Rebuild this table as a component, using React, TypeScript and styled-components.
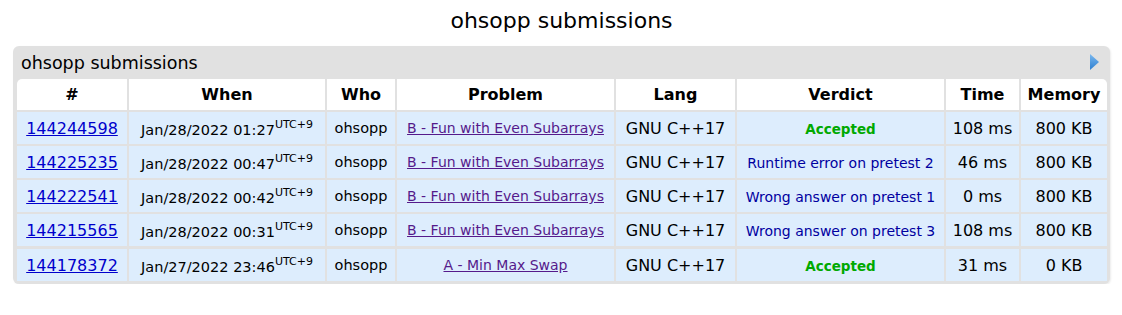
import React from 'react'
import styled, { createGlobalStyle } from 'styled-components'

const GlobalStyle = createGlobalStyle`
  body {
    margin: 0;
    background: #fff;
    font-family: 'DejaVu Sans', Verdana, sans-serif;
    color: #000;
  }
`

const Page = styled.div`
  padding: 8px 12px 0 13px;
`

const Title = styled.h1`
  margin: 0 0 12px;
  text-align: center;
  font-size: 22px;
  font-weight: normal;
  line-height: 26px;
`

const Panel = styled.div`
  width: 1097px;
  background: #e1e1e1;
  border-radius: 6px;
  padding: 0 3px 3px 4px;
  box-sizing: border-box;
  box-shadow: 1px 1px 2px rgba(0, 0, 0, 0.08);
`

const PanelHead = styled.div`
  display: flex;
  align-items: center;
  justify-content: space-between;
  height: 33px;
  padding: 0 8px 0 4px;
  font-size: 17.5px;
`

const Arrow = styled.svg`
  display: block;
  margin-top: -1px;
`

const Table = styled.table`
  width: 1090px;
  border-collapse: separate;
  border-spacing: 0;
  table-layout: fixed;
`

const Th = styled.th<{ $w: number; $last?: boolean; $first?: boolean }>`
  width: ${p => p.$w}px;
  height: 31px;
  padding: 0;
  background: #fff;
  font-size: 16px;
  font-weight: bold;
  text-align: center;
  border-right: ${p => (p.$last ? 'none' : '2px solid #e1e1e1')};
  border-bottom: 2px solid #e1e1e1;
  border-top-left-radius: ${p => (p.$first ? '5px' : '0')};
  border-top-right-radius: ${p => (p.$last ? '5px' : '0')};
`

const Td = styled.td<{ $size?: number; $last?: boolean; $thick?: boolean; $bottom?: boolean }>`
  height: 32px;
  padding: 0;
  background: #ddedfd;
  text-align: center;
  font-size: ${p => p.$size ?? 16}px;
  white-space: nowrap;
  overflow: hidden;
  border-right: ${p => (p.$last ? 'none' : '2px solid #e1e1e1')};
  border-bottom: ${p => (p.$bottom ? 'none' : p.$thick ? '3px solid #e1e1e1' : '2px solid #e1e1e1')};
`

const IdLink = styled.a`
  color: #0000cc;
  text-decoration: underline;
`

const ProblemLink = styled.a`
  color: #551a8b;
  text-decoration: underline;
`

const When = styled.span`
  position: relative;
  top: 2px;
`

const Sup = styled.sup`
  font-size: 11px;
  vertical-align: 7px;
  line-height: 0;
`

const Verdict = styled.span<{ $ok: boolean }>`
  color: ${p => (p.$ok ? '#00a900' : '#0000a0')};
  font-weight: ${p => (p.$ok ? 'bold' : 'normal')};
  font-size: ${p => (p.$ok ? '13.5px' : '14px')};
`

const columns = [
  { label: '#', w: 110 },
  { label: 'When', w: 196 },
  { label: 'Who', w: 68 },
  { label: 'Problem', w: 217 },
  { label: 'Lang', w: 119 },
  { label: 'Verdict', w: 207 },
  { label: 'Time', w: 73 },
  { label: 'Memory', w: 86 },
]

const rows = [
  { id: '144244598', when: 'Jan/28/2022 01:27', problem: 'B - Fun with Even Subarrays', verdict: 'Accepted', ok: true, time: '108 ms', mem: '800 KB' },
  { id: '144225235', when: 'Jan/28/2022 00:47', problem: 'B - Fun with Even Subarrays', verdict: 'Runtime error on pretest 2', ok: false, time: '46 ms', mem: '800 KB' },
  { id: '144222541', when: 'Jan/28/2022 00:42', problem: 'B - Fun with Even Subarrays', verdict: 'Wrong answer on pretest 1', ok: false, time: '0 ms', mem: '800 KB' },
  { id: '144215565', when: 'Jan/28/2022 00:31', problem: 'B - Fun with Even Subarrays', verdict: 'Wrong answer on pretest 3', ok: false, time: '108 ms', mem: '800 KB' },
  { id: '144178372', when: 'Jan/27/2022 23:46', problem: 'A - Min Max Swap', verdict: 'Accepted', ok: true, time: '31 ms', mem: '0 KB' },
]

const App: React.FC = () => {
  return (
    <Page>
      <GlobalStyle />
      <Title>ohsopp submissions</Title>
      <Panel>
        <PanelHead>
          <span>ohsopp submissions</span>
          <Arrow width="9" height="16" viewBox="0 0 9 16">
            <defs>
              <linearGradient id="arrowGrad" x1="0" y1="0" x2="0" y2="1">
                <stop offset="0" stopColor="#7ab8ef" />
                <stop offset="1" stopColor="#2e7fd0" />
              </linearGradient>
            </defs>
            <polygon points="0,0 9,8 0,16" fill="url(#arrowGrad)" />
          </Arrow>
        </PanelHead>
        <Table>
          <thead>
            <tr>
              {columns.map((c, i) => (
                <Th key={c.label} $w={c.w} $first={i === 0} $last={i === columns.length - 1}>
                  {c.label}
                </Th>
              ))}
            </tr>
          </thead>
          <tbody>
            {rows.map((r, i) => {
              const thick = i === rows.length - 2
              const bottom = i === rows.length - 1
              return (
                <tr key={r.id}>
                  <Td $thick={thick} $bottom={bottom}>
                    <IdLink href="#">{r.id}</IdLink>
                  </Td>
                  <Td $size={14.5} $thick={thick} $bottom={bottom}>
                    <When>
                      {r.when}
                      <Sup>UTC+9</Sup>
                    </When>
                  </Td>
                  <Td $size={14.5} $thick={thick} $bottom={bottom}>ohsopp</Td>
                  <Td $size={14} $thick={thick} $bottom={bottom}>
                    <ProblemLink href="#">{r.problem}</ProblemLink>
                  </Td>
                  <Td $thick={thick} $bottom={bottom}>GNU C++17</Td>
                  <Td $thick={thick} $bottom={bottom}>
                    <Verdict $ok={r.ok}>{r.verdict}</Verdict>
                  </Td>
                  <Td $thick={thick} $bottom={bottom}>{r.time}</Td>
                  <Td $last $thick={thick} $bottom={bottom}>{r.mem}</Td>
                </tr>
              )
            })}
          </tbody>
        </Table>
      </Panel>
    </Page>
  )
}

export default App
